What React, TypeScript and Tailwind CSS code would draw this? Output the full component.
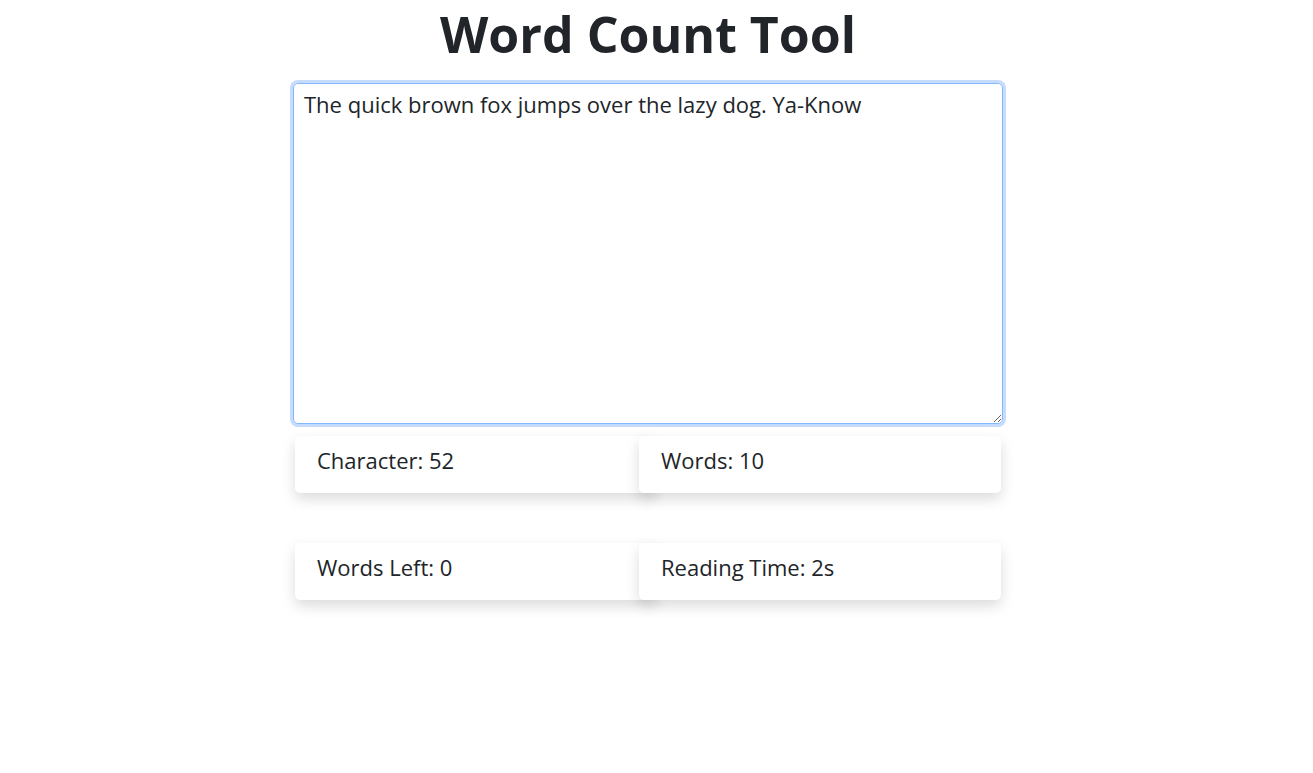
import { useEffect, useRef } from "react"

const text = "The quick brown fox jumps over the lazy dog. Ya-Know"

function StatCard({ label, className = "" }: { label: string; className?: string }) {
  return (
    <div
      className={`h-[57px] rounded-[5px] bg-white px-[22px] pt-[9px] text-[22px] leading-[30px] text-[#212529] shadow-[0_6px_14px_rgba(0,0,0,0.14)] ${className}`}
    >
      {label}
    </div>
  )
}

export default function App() {
  const ref = useRef<HTMLTextAreaElement>(null)

  useEffect(() => {
    const el = ref.current
    if (el) {
      el.focus()
      el.setSelectionRange(text.length, text.length)
    }
  }, [])

  return (
    <div className="min-h-[773px] w-[1296px] bg-white pt-[4px] font-['Open_Sans',sans-serif] text-[#212529]">
      <h1 className="mb-[19px] text-center text-[50px] font-bold leading-[60px]">Word Count Tool</h1>

      <div className="mx-auto w-[710px]">
        <textarea
          ref={ref}
          defaultValue={text}
          className="block h-[341px] w-full rounded-[5px] border border-[#86b7fe] px-[10px] pt-[5px] text-[22px] leading-[30px] text-[#212529] caret-[#212529] shadow-[0_0_0_3px_#c5dcfe] outline-none"
        />

        <div className="mt-[12px] flex pl-[2px]">
          <StatCard label="Character: 52" className="w-[361px]" />
          <StatCard label="Words: 10" className="relative -ml-[17px] w-[362px]" />
        </div>

        <div className="mt-[50px] flex pl-[2px]">
          <StatCard label="Words Left: 0" className="w-[361px]" />
          <StatCard label="Reading Time: 2s" className="relative -ml-[17px] w-[362px]" />
        </div>
      </div>
    </div>
  )
}
